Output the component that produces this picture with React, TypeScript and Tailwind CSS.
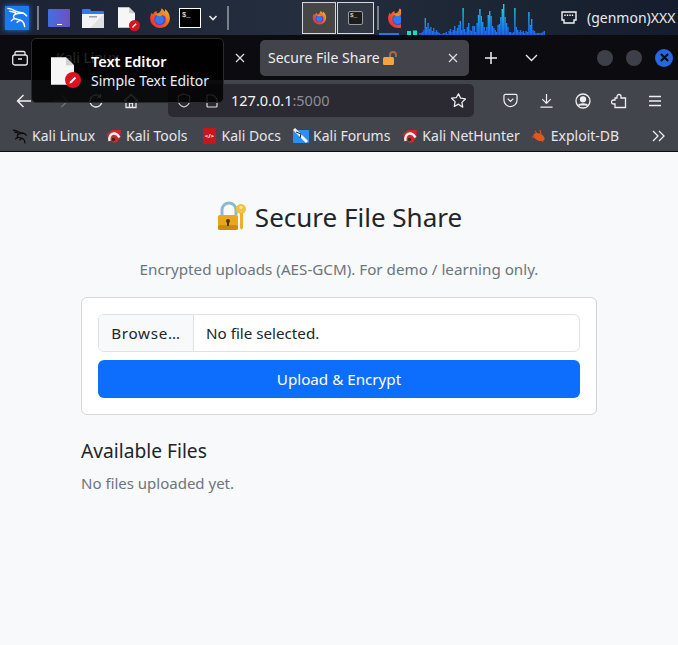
import React from "react";

const font = { fontFamily: '"Noto Sans", sans-serif' };

function FirefoxIcon({ size = 24 }: { size?: number }) {
  return (
    <svg width={size} height={size} viewBox="0 0 24 24">
      <defs>
        <linearGradient id="ffo" x1="0" y1="1" x2="1" y2="0">
          <stop offset="0" stopColor="#e3213f" />
          <stop offset="0.55" stopColor="#f5661f" />
          <stop offset="1" stopColor="#ffc22f" />
        </linearGradient>
      </defs>
      <path d="M12 23C5.800 23 1.200 18.200 1.200 12.400 1.200 10 2 7.600 3.200 6c.2 1 .6 1.800 1.100 2.300C5 6.200 6.500 4.800 8.200 4.300c-.2 1.300.4 2.200 1 2.700C11 6 13.200 5 13.600 1.500c3 1.700 3.300 3.800 3.300 3.800.5-.6.900-1.700.9-3 2.800 2.500 4.900 6 4.900 10C22.800 18.200 18.200 23 12 23z" fill="url(#ffo)" />
      <circle cx="12" cy="13.500" r="6.200" fill="#5b3bd0" />
      <circle cx="11.500" cy="13.800" r="4.800" fill="#2f7be8" />
      <path d="M7 8.500c2-1.500 6-2 9 0 2 1.500 3 4 2 7 1.500-4-1-6.500-4-6.500-1 1.500-4 1.200-7-.5z" fill="#f98a1d" />
    </svg>
  );
}

function DocIcon({ w, h, badge }: { w: number; h: number; badge: number }) {
  return (
    <span className="relative block" style={{ width: w, height: h }}>
      <svg width={w} height={h} viewBox="0 0 20 24">
        <path d="M0 0h13l7 7v17H0z" fill="#f6f6f6" />
        <path d="M13 0l7 7h-7z" fill="#cfcfcf" />
      </svg>
      <span className="absolute flex items-center justify-center rounded-full bg-[#d9141e]" style={{ width: badge, height: badge, right: -badge / 2 + 1, bottom: -3 }}>
        <svg width={badge * 0.62} height={badge * 0.62} viewBox="0 0 10 10">
          <path d="M1.500 8.500L2 6.500 6.800 1.700l1.500 1.500L3.500 8z" fill="#fff" />
        </svg>
      </span>
    </span>
  );
}

const bars = [
  2, 2, 3, 5, 17, 8, 12, 6, 8, 4, 7, 3, 5, 3, 2, 1, 1, 2, 2, 3, 1, 4, 6, 3, 5, 9, 4, 7, 10, 14, 5, 27, 6, 3, 8, 12, 5, 4, 9, 9, 3, 12, 20, 26, 19, 13, 8, 4, 8, 20, 24, 19, 9, 7, 5, 3, 10, 11, 18, 26, 31, 18, 12, 8, 3, 3, 2, 3, 27, 8, 5, 3, 5, 3, 4, 2, 4, 3, 23, 10, 16, 5, 4, 2, 2, 2, 2, 2, 3, 4,
];

function Graph() {
  return (
    <svg width="168" height="34" viewBox="0 0 168 34" className="block">
      <defs>
        <linearGradient id="gr" gradientUnits="userSpaceOnUse" x1="0" y1="34" x2="0" y2="2">
          <stop offset="0" stopColor="#1c64f2" />
          <stop offset="0.5" stopColor="#17a0ee" />
          <stop offset="1" stopColor="#12e6d8" />
        </linearGradient>
      </defs>
      <rect x="0" y="32" width="20" height="2" fill="#1e78f0" />
      <rect x="28" y="30" width="4" height="4" fill="#14e0c8" />
      <rect x="34" y="29.500" width="4" height="4.500" fill="#14e0c8" />
      {bars.map((b, i) => (
        <rect key={i} x={40 + i * 1.400} y={34 - b} width="1.400" height={b} fill="url(#gr)" />
      ))}
    </svg>
  );
}

function KaliDragon({ size = 22, color = "#fff", width = 1.500 }: { size?: number; color?: string; width?: number }) {
  return (
    <svg width={size} height={size} viewBox="0 0 24 24" fill="none" stroke={color} strokeWidth={width} strokeLinecap="round" strokeLinejoin="round">
      <path d="M2 2.500c3 .3 5 1 7.500 2.500 3 1.600 5.500 1.800 8 2.300 1.500.4 2.800 1.500 4 3" />
      <path d="M4 5.500c2 0 4 .7 6 1.700M17.500 7.300c-3 .1-6.500.3-8.500 1.700-1.600 1.200-1.500 3.300.5 4.200 2.500 1 5.700 1 7.500 2.600 1.600 1.300 2.200 3.200 2.500 5.700" />
      <path d="M9.500 13.200c-1.500.2-3 1-4 2.300M14 15.500c-1 .2-1.800.8-2.500 1.500" />
    </svg>
  );
}

function Bookmark({ icon, label }: { icon: React.ReactNode; label: string }) {
  return (
    <div className="flex items-center gap-[4px] shrink-0">
      <span className="flex h-4 w-4 items-center justify-center">{icon}</span>
      <span className="text-[14px] leading-none text-[#e6e6e8] whitespace-nowrap">{label}</span>
    </div>
  );
}

function KaliTool() {
  return (
    <svg width="16" height="16" viewBox="0 0 16 16">
      <path d="M1 6l5-4 9 0-1 8-3 4-3 1-6-4z" fill="#d8232f" />
      <path d="M3.500 13c-.8-4 1-7 4-7.500 2.500-.4 4.500 1.500 6 4" fill="none" stroke="#f2f2f2" strokeWidth="2.400" />
      <circle cx="7.500" cy="11.500" r="1.700" fill="#2c2c2c" />
    </svg>
  );
}

export default function App() {
  return (
    <div className="relative flex h-[645px] w-[678px] flex-col overflow-hidden bg-[#f8f9fa]" style={font}>
      {/* desktop panel */}
      <div className="flex h-[35px] shrink-0 items-center bg-gradient-to-r from-[#1b2334] via-[#252e3e] via-45% to-[#151d2c]">
        <div className="ml-[5px] flex h-6 w-6 items-center justify-center bg-[#1e78ee] shadow-[0_0_5px_#1e78ee]">
          <KaliDragon size={23} />
        </div>
        <div className="ml-[8px] h-6 w-[2px] bg-[#7a8088]" />
        <div className="ml-[9px] flex h-[18px] w-[22px] items-end justify-center rounded-[1px] bg-gradient-to-r from-[#3f6fe0] to-[#6a50c0]">
          <span className="mb-[2px] h-[1px] w-[5px] bg-white" />
        </div>
        <svg className="ml-[12px]" width="22" height="20" viewBox="0 0 22 20">
          <path d="M0 2a1 1 0 011-1h7l2 3H0z" fill="#2f7be8" />
          <rect x="0" y="3" width="22" height="6" rx="1" fill="#2f7be8" />
          <rect x="0" y="6" width="22" height="14" fill="#f2f3f5" />
          <path d="M22 6v14H8z" fill="#dfe1e4" />
          <rect x="7" y="8" width="8" height="1.500" fill="#9aa0a6" />
        </svg>
        <div className="ml-[14px]">
          <DocIcon w={17} h={21} badge={11} />
        </div>
        <div className="ml-[14px]">
          <FirefoxIcon size={22} />
        </div>
        <div className="ml-[8px] flex h-[20px] w-[22px] items-start border border-white bg-black px-[2px] py-[1px]">
          <span className="text-[7px] leading-[10px] text-white" style={{ fontFamily: '"Liberation Mono", monospace' }}>$_</span>
        </div>
        <svg className="ml-[7px]" width="10" height="8" viewBox="0 0 10 8" fill="none" stroke="#e8e8e8" strokeWidth="1.600">
          <path d="M1.500 2l3.500 3.500L8.500 2" />
        </svg>
        <div className="ml-[9px] h-6 w-[2px] bg-[#7a8088]" />
        <div className="ml-[73px] flex h-[32px] w-[34px] items-center justify-center border border-[#d8d8d8] bg-[#464646]">
          <FirefoxIcon size={15} />
        </div>
        <div className="ml-[1px] flex h-[32px] w-[37px] items-center justify-center border border-[#d8d8d8] bg-[#333845]">
          <span className="flex h-[14px] w-[15px] items-start rounded-[2px] border border-[#9a9a9a] bg-[#1c1c1c] px-[1px]">
            <span className="text-[6px] leading-[8px] text-white" style={{ fontFamily: '"Liberation Mono", monospace' }}>$_</span>
          </span>
        </div>
        <div className="ml-[3px] h-6 w-[2px] bg-[#7a8088]" />
        <div className="relative flex h-[35px] w-[170px] items-end">
          <div className="absolute left-[8px] top-[7px] overflow-hidden" style={{ width: 14 }}>
            <FirefoxIcon size={22} />
          </div>
          <Graph />
        </div>
        <svg className="ml-[12px]" width="16" height="14" viewBox="0 0 16 14" fill="none" stroke="#f2f2f2" strokeWidth="1.400">
          <path d="M1 1h14v8h-2v3H3V9H1z" />
          <path d="M4 3.500v1.500M6.500 3.500v1.500M9 3.500v1.500M11.500 3.500v1.500" />
        </svg>
        <span className="ml-[10px] text-[14px] text-[#e8eaef] whitespace-nowrap">(genmon)XXX</span>
      </div>

      {/* tab bar */}
      <div className="flex h-[45px] shrink-0 items-center bg-[#0c0c10]">
        <svg className="ml-[12px]" width="16" height="16" viewBox="0 0 16 16" fill="none" stroke="#e8e8ea" strokeWidth="1.300">
          <rect x="0.700" y="5" width="14.600" height="10" rx="2" />
          <path d="M3 5V3a1.500 1.500 0 011.500-1.500h7A1.500 1.500 0 0113 3v2M6 9h4" />
        </svg>
        <span className="ml-[28px] w-[170px] text-[14px] text-[#e8e8ea]">Kali Linux</span>
        <svg width="10" height="10" viewBox="0 0 10 10" stroke="#e0e0e2" strokeWidth="1.200" className="ml-[9px]">
          <path d="M1 1l8 8M9 1l-8 8" />
        </svg>
        <div className="ml-[15px] flex h-[36px] w-[209px] items-center rounded-[5px] bg-[#42434b] px-2">
          <span className="text-[14px] text-[#eeeef0] whitespace-nowrap">Secure File Share</span>
          <svg className="ml-[2px]" width="16" height="16" viewBox="0 0 16 16">
            <path d="M8 7V5a3 3 0 016 0v2" fill="none" stroke="#a8694a" strokeWidth="2" />
            <rect x="1" y="7" width="11" height="8" rx="1.500" fill="#f0a63a" />
          </svg>
          <svg width="10" height="10" viewBox="0 0 10 10" stroke="#e0e0e2" strokeWidth="1.200" className="ml-auto mr-[3px]">
            <path d="M1 1l8 8M9 1l-8 8" />
          </svg>
        </div>
        <svg className="ml-[15px]" width="14" height="14" viewBox="0 0 14 14" stroke="#f0f0f2" strokeWidth="1.500">
          <path d="M7 1v12M1 7h12" />
        </svg>
        <svg className="ml-[27px]" width="13" height="8" viewBox="0 0 13 8" fill="none" stroke="#e8e8ea" strokeWidth="1.400">
          <path d="M1 1l5.500 5.500L12 1" />
        </svg>
        <span className="ml-[59px] h-4 w-4 rounded-full bg-[#3d4048]" />
        <span className="ml-[13px] h-4 w-4 rounded-full bg-[#3d4048]" />
        <span className="ml-[13px] flex h-[18px] w-[18px] items-center justify-center rounded-full bg-[#2668e0]">
          <svg width="9" height="9" viewBox="0 0 10 10" stroke="#0c0c10" strokeWidth="2.400">
            <path d="M1 1l8 8M9 1l-8 8" />
          </svg>
        </span>
      </div>

      {/* toolbar */}
      <div className="flex h-[41px] shrink-0 items-center bg-[#43454d]">
        <svg className="ml-[16px]" width="16" height="16" viewBox="0 0 16 16" fill="none" stroke="#f0f0f2" strokeWidth="1.400">
          <path d="M15 8H1.500M7.500 2l-6 6 6 6" />
        </svg>
        <svg className="ml-[21px]" width="16" height="16" viewBox="0 0 16 16" fill="none" stroke="#70727a" strokeWidth="1.400">
          <path d="M1 8h13.500M8.500 2l6 6-6 6" />
        </svg>
        <svg className="ml-[19px]" width="16" height="16" viewBox="0 0 16 16" fill="none" stroke="#e8e8ea" strokeWidth="1.300">
          <path d="M14 8a6 6 0 11-2-4.500M12.500 1v3h-3" />
        </svg>
        <svg className="ml-[19px]" width="16" height="16" viewBox="0 0 16 16" fill="none" stroke="#e8e8ea" strokeWidth="1.300">
          <path d="M1 8l7-6.500L15 8M3 7v7.500h10V7M6.500 14.500V10h3v4.500" />
        </svg>
        <div className="ml-[29px] flex h-[33px] w-[306px] items-center rounded-[5px] bg-[#2b2a33]">
          <svg className="ml-[9px]" width="14" height="15" viewBox="0 0 14 16" fill="none" stroke="#d5d5d8" strokeWidth="1.200">
            <path d="M7 1l6 2v5c0 3.500-3 6-6 7-3-1-6-3.500-6-7V3z" />
          </svg>
          <svg className="ml-[15px]" width="12" height="14" viewBox="0 0 12 14" fill="none" stroke="#e0e0e2" strokeWidth="1.200">
            <path d="M1 2a1 1 0 011-1h5l4 4v7a1 1 0 01-1 1H2a1 1 0 01-1-1z" />
          </svg>
          <span className="ml-[13px] text-[14.500px] text-[#f4f4f6]">
            127.0.0.1<span className="text-[#8e8e94]">:5000</span>
          </span>
          <svg className="ml-auto mr-[7px]" width="17" height="17" viewBox="0 0 24 24" fill="none" stroke="#eeeef0" strokeWidth="1.800" strokeLinejoin="round">
            <path d="M12 2.500l3 6.300 6.800 1-5 4.800 1.200 6.900L12 17.200l-6 3.300 1.200-6.900-5-4.800 6.800-1z" />
          </svg>
        </div>
        <svg className="ml-[29px]" width="15" height="15" viewBox="0 0 16 16" fill="none" stroke="#eeeef0" strokeWidth="1.300">
          <path d="M1 3a1.500 1.500 0 011.500-1.500h11A1.500 1.500 0 0115 3v4.500a7 7 0 01-14 0zM5 6l3 3 3-3" />
        </svg>
        <svg className="ml-[21px]" width="15" height="15" viewBox="0 0 16 16" fill="none" stroke="#eeeef0" strokeWidth="1.300">
          <path d="M8 1v9.500M3.500 6.500L8 11l4.500-4.500M1.500 15h13" />
        </svg>
        <svg className="ml-[21px]" width="16" height="16" viewBox="0 0 16 16" fill="none" stroke="#eeeef0" strokeWidth="1.300">
          <circle cx="8" cy="8" r="7" />
          <circle cx="8" cy="6.300" r="2.500" fill="#eeeef0" />
          <path d="M3.500 12.500c1-2 8-2 9 0" fill="#eeeef0" />
        </svg>
        <svg className="ml-[20px]" width="16" height="16" viewBox="0 0 16 16" fill="none" stroke="#eeeef0" strokeWidth="1.300">
          <path d="M6 3.500a2 2 0 114 0V5h4.500v9.500H4V11H2.500a2 2 0 010-4H4V5h2z" />
        </svg>
        <svg className="ml-[21px]" width="14" height="12" viewBox="0 0 14 12" stroke="#eeeef0" strokeWidth="1.400">
          <path d="M1 1.500h12M1 6h12M1 10.500h12" />
        </svg>
      </div>

      {/* bookmarks */}
      <div className="flex h-[31px] shrink-0 items-center border-b border-[#0c0c10] bg-[#43454d] pl-[12px]">
        <Bookmark icon={<KaliDragon size={17} color="#0a0a0a" width={1.800} />} label="Kali Linux" />
        <div className="ml-[11px]">
          <Bookmark icon={<KaliTool />} label="Kali Tools" />
        </div>
        <div className="ml-[14px]">
          <Bookmark
            icon={
              <span className="flex h-[16px] w-[13px] items-center justify-center rounded-[1px] bg-[#c8161d]">
                <span className="text-[6px] font-bold leading-none text-white">&lt;/&gt;</span>
              </span>
            }
            label="Kali Docs"
          />
        </div>
        <div className="ml-[12px]">
          <Bookmark
            icon={
              <svg width="16" height="16" viewBox="0 0 16 16">
                <rect y="2" width="16" height="13" rx="1" fill="#2b8ef0" />
                <path d="M1 1l13 13" stroke="#f4f4f4" strokeWidth="3" />
                <path d="M3 4l5 2-1 4" stroke="#222" strokeWidth="1" fill="none" />
              </svg>
            }
            label="Kali Forums"
          />
        </div>
        <div className="ml-[12px]">
          <Bookmark icon={<KaliTool />} label="Kali NetHunter" />
        </div>
        <div className="ml-[11px]">
          <Bookmark
            icon={
              <svg width="16" height="14" viewBox="0 0 16 14">
                <ellipse cx="8" cy="8" rx="6" ry="3.500" transform="rotate(25 8 8)" fill="#e2571c" />
                <path d="M1 8h4M4 2l3 4M9 1l1 4M12 13l-2-4" stroke="#e2571c" strokeWidth="1" />
              </svg>
            }
            label="Exploit-DB"
          />
        </div>
        <svg className="ml-auto mr-[13px]" width="13" height="12" viewBox="0 0 13 12" fill="none" stroke="#eeeef0" strokeWidth="1.300">
          <path d="M1 1l5 5-5 5M7 1l5 5-5 5" />
        </svg>
      </div>

      {/* page */}
      <main className="flex flex-1 flex-col items-stretch px-[81px] text-[#212529]">
        <h1 className="mt-[47px] flex items-center justify-center text-[26px] font-normal leading-[36px]">
          <svg className="mr-[7px]" width="32" height="32" viewBox="0 0 32 32">
            <path d="M6 14V9a7 7 0 0114 0v5" fill="none" stroke="#8fb8d0" strokeWidth="3" />
            <rect x="2" y="14" width="20" height="15" rx="2" fill="#e9a817" />
            <rect x="2" y="24" width="20" height="5" rx="2" fill="#c98a10" />
            <circle cx="12" cy="20" r="2" fill="#4a3410" />
            <rect x="11" y="20" width="2" height="5" fill="#4a3410" />
            <circle cx="25" cy="8" r="5" fill="#f5c33b" />
            <circle cx="25" cy="6.500" r="1.500" fill="#fff3c4" />
            <path d="M24 12h3v15l-1.500 2-1.500-2z" fill="#eeb027" />
          </svg>
          Secure File Share
        </h1>
        <p className="mt-[22px] text-center text-[15.200px] leading-[24px] text-[#6c757d]">Encrypted uploads (AES-GCM). For demo / learning only.</p>
        <div className="mt-[16px] flex flex-col gap-2 rounded-[6px] border border-[#d3d5d8] bg-white p-4">
          <div className="flex h-[38px] overflow-hidden rounded-[6px] border border-[#dee2e6] text-[15.200px]">
            <div className="flex w-[95px] items-center justify-center border-r border-[#dee2e6] bg-[#f8f9fa] tracking-[0.7px]">Browse…</div>
            <div className="flex items-center pl-3">No file selected.</div>
          </div>
          <button className="h-[38px] rounded-[6px] bg-[#0d6efd] text-[15.200px] text-white">Upload &amp; Encrypt</button>
        </div>
        <h2 className="mt-[23px] text-[19.200px] font-normal leading-[26px]">Available Files</h2>
        <p className="mt-[7px] text-[15px] leading-[24px] text-[#6c757d]">No files uploaded yet.</p>
      </main>

      {/* tooltip */}
      <div className="absolute left-[31px] top-[38px] flex h-[65px] w-[193px] items-center rounded-[5px] border border-[#2a2a2a] bg-[rgba(0,0,0,0.84)]">
        <div className="ml-[19px]">
          <DocIcon w={23} h={28} badge={16} />
        </div>
        <div className="ml-[17px] flex flex-col">
          <span className="text-[14.500px] font-semibold leading-[20px] text-white">Text Editor</span>
          <span className="text-[14px] leading-[20px] text-[#e8eefc]">Simple Text Editor</span>
        </div>
      </div>
    </div>
  );
}
